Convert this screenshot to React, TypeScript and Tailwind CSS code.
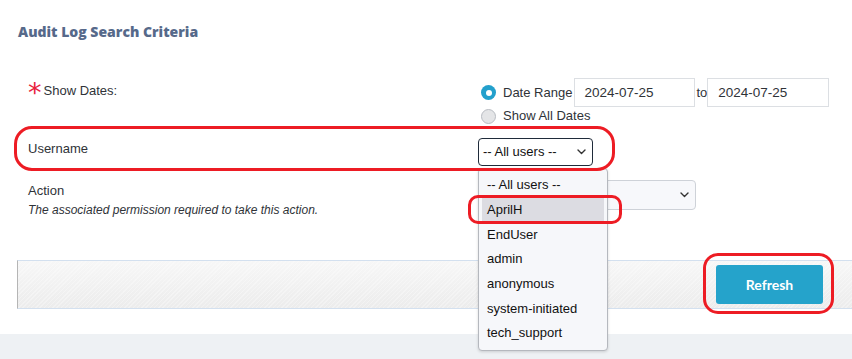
import React from "react";

const Radio = ({ checked }: { checked?: boolean }) =>
  checked ? (
    <span className="block w-[15px] h-[15px] rounded-full bg-[#23a0cc] flex items-center justify-center shrink-0">
      <span className="block w-[6px] h-[6px] rounded-full bg-white" />
    </span>
  ) : (
    <span className="block w-[15px] h-[15px] rounded-full bg-[#e4e5e7] border border-[#b8bcc2] shrink-0" />
  );

const Chevron = () => (
  <svg width="9" height="6" viewBox="0 0 9 6" fill="none">
    <path d="M1 1l3.5 3.5L8 1" stroke="#333" strokeWidth="1.4" strokeLinecap="round" strokeLinejoin="round" />
  </svg>
);

export default function App() {
  const users = ["-- All users --", "AprilH", "EndUser", "admin", "anonymous", "system-initiated", "tech_support"];
  return (
    <div className="relative w-[852px] h-[359px] bg-white overflow-hidden text-[#2f3338] font-['Liberation_Sans',Arial,sans-serif] text-[13px] leading-[16px]">
      <div className="pt-[24px] pl-[18px] font-['Open_Sans',sans-serif] font-extrabold text-[14px] leading-[16px] text-[#56698a]">
        Audit Log Search Criteria
      </div>

      {/* Show Dates row */}
      <div className="mt-[38px] flex">
        <div className="w-[478px] pl-[28px] pt-[5px] flex items-start">
          <span className="text-[#e8213d] text-[27px] leading-[16px] mr-[2px] mt-[2px] font-['DejaVu_Sans',sans-serif]">*</span>
          <span>Show Dates:</span>
        </div>
        <div className="flex flex-col">
          <div className="flex items-center h-[29px]">
            <span className="ml-[3px]"><Radio checked /></span>
            <span className="ml-[7px]">Date Range</span>
            <div className="ml-[2px] w-[121px] h-[29px] border border-[#dcdfe3] flex items-center pl-[9px] text-[13.5px]">2024-07-25</div>
            <span className="ml-[1px]">to</span>
            <div className="w-[122px] h-[29px] border border-[#dcdfe3] flex items-center pl-[10px] text-[13.5px]">2024-07-25</div>
          </div>
          <div className="flex items-center h-[18px]">
            <span className="ml-[3px]"><Radio /></span>
            <span className="ml-[7px]">Show All Dates</span>
          </div>
        </div>
      </div>

      {/* Username row */}
      <div className="mt-[13px] flex">
        <div className="w-[478px] pl-[28px] pt-[3px]">Username</div>
        <div className="w-[115px] h-[28px] border border-[#1f2b3a] rounded-[4px] flex items-center justify-between pl-[4px] pr-[6px] text-[#111]">
          <span>-- All users --</span>
          <Chevron />
        </div>
      </div>

      {/* Action row */}
      <div className="mt-[14px] flex h-[30px]">
        <div className="w-[478px] pl-[28px] pt-[3px]">
          <div>Action</div>
          <div className="mt-[4px] italic text-[12px] leading-[14px]">The associated permission required to take this action.</div>
        </div>
        <div className="w-[218px] h-[30px] border border-[#ced2d8] rounded-[4px] bg-[#f7f8fb] flex items-center justify-end pr-[6px]">
          <Chevron />
        </div>
      </div>

      {/* Footer bar */}
      <div className="mt-[50px] ml-[17px] h-[49px] border-t border-b border-[#d3e0ef] border-l border-l-[#b5b5b5] bg-[repeating-linear-gradient(135deg,rgba(255,255,255,0.3)_0px,rgba(255,255,255,0.3)_1px,transparent_1px,transparent_3px),linear-gradient(180deg,#f7f7f7,#ececec)] flex items-center justify-end pr-[29px]">
        <button className="w-[107px] h-[39px] rounded-[3px] bg-[#25a3cb] text-white font-['Lato',sans-serif] font-bold text-[14px]">
          Refresh
        </button>
      </div>

      <div className="mt-[25px] h-[25px] bg-[#eef1f4]" />

      {/* Dropdown list overlay */}
      <div className="absolute left-[478px] top-[168px] w-[130px] h-[183px] bg-[#f6f7fa] border border-[#b5b8be] rounded-[4px] shadow-[0_1px_3px_rgba(0,0,0,0.15)] pt-[4px] text-[#111]">
        {users.map((u, i) => (
          <div key={u} className={`mx-[3px] px-[5px] h-[24.7px] flex items-center ${i === 1 ? "bg-[#dcdce2]" : ""}`}>
            {u}
          </div>
        ))}
      </div>

      {/* Red annotation outlines */}
      <div className="absolute left-[14px] top-[126px] w-[601px] h-[45px] border-[3px] border-[#ed1c24] rounded-[18px]" />
      <div className="absolute left-[468px] top-[195px] w-[154px] h-[29px] border-[3px] border-[#ed1c24] rounded-[10px]" />
      <div className="absolute left-[703px] top-[253px] w-[131px] h-[61px] border-[3px] border-[#ed1c24] rounded-[15px]" />
    </div>
  );
}
